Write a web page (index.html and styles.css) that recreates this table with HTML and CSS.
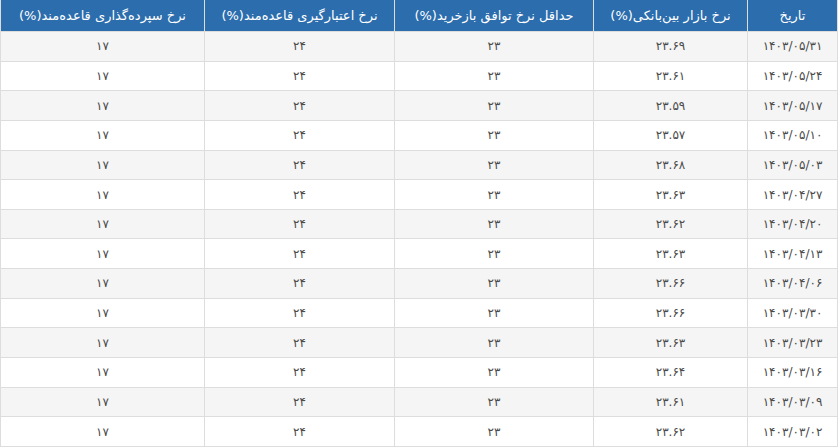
FILE: index.html
```html
<!DOCTYPE html>
<html lang="fa" dir="rtl">
<head>
<meta charset="utf-8">
<title>نرخ‌ها</title>
<link rel="stylesheet" href="styles.css">
</head>
<body>
<table class="rates">
  <colgroup>
    <col class="c1"><col class="c2"><col class="c3"><col class="c4"><col class="c5">
  </colgroup>
  <thead>
    <tr>
      <th>تاریخ</th>
      <th>نرخ بازار بین‌بانکی(%)</th>
      <th>حداقل نرخ توافق بازخرید(%)</th>
      <th>نرخ اعتبارگیری قاعده‌مند(%)</th>
      <th>نرخ سپرده‌گذاری قاعده‌مند(%)</th>
    </tr>
  </thead>
  <tbody>
    <tr><td>۱۴۰۳/۰۵/۳۱</td><td>۲۳.۶۹</td><td>۲۳</td><td>۲۴</td><td>۱۷</td></tr>
    <tr><td>۱۴۰۳/۰۵/۲۴</td><td>۲۳.۶۱</td><td>۲۳</td><td>۲۴</td><td>۱۷</td></tr>
    <tr><td>۱۴۰۳/۰۵/۱۷</td><td>۲۳.۵۹</td><td>۲۳</td><td>۲۴</td><td>۱۷</td></tr>
    <tr><td>۱۴۰۳/۰۵/۱۰</td><td>۲۳.۵۷</td><td>۲۳</td><td>۲۴</td><td>۱۷</td></tr>
    <tr><td>۱۴۰۳/۰۵/۰۳</td><td>۲۳.۶۸</td><td>۲۳</td><td>۲۴</td><td>۱۷</td></tr>
    <tr><td>۱۴۰۳/۰۴/۲۷</td><td>۲۳.۶۳</td><td>۲۳</td><td>۲۴</td><td>۱۷</td></tr>
    <tr><td>۱۴۰۳/۰۴/۲۰</td><td>۲۳.۶۲</td><td>۲۳</td><td>۲۴</td><td>۱۷</td></tr>
    <tr><td>۱۴۰۳/۰۴/۱۳</td><td>۲۳.۶۳</td><td>۲۳</td><td>۲۴</td><td>۱۷</td></tr>
    <tr><td>۱۴۰۳/۰۴/۰۶</td><td>۲۳.۶۶</td><td>۲۳</td><td>۲۴</td><td>۱۷</td></tr>
    <tr><td>۱۴۰۳/۰۳/۳۰</td><td>۲۳.۶۶</td><td>۲۳</td><td>۲۴</td><td>۱۷</td></tr>
    <tr><td>۱۴۰۳/۰۳/۲۳</td><td>۲۳.۶۳</td><td>۲۳</td><td>۲۴</td><td>۱۷</td></tr>
    <tr><td>۱۴۰۳/۰۳/۱۶</td><td>۲۳.۶۴</td><td>۲۳</td><td>۲۴</td><td>۱۷</td></tr>
    <tr><td>۱۴۰۳/۰۳/۰۹</td><td>۲۳.۶۱</td><td>۲۳</td><td>۲۴</td><td>۱۷</td></tr>
    <tr><td>۱۴۰۳/۰۳/۰۲</td><td>۲۳.۶۲</td><td>۲۳</td><td>۲۴</td><td>۱۷</td></tr>
  </tbody>
</table>
</body>
</html>
```

FILE: styles.css
```css
html, body {
  margin: 0;
  padding: 0;
  background: #ffffff;
}
body {
  font-family: "DejaVu Sans", "Noto Sans", sans-serif;
}
.rates {
  width: 837px;
  border-collapse: collapse;
  table-layout: fixed;
  direction: rtl;
}
.rates .c1 { width: 90px; }
.rates .c2 { width: 154px; }
.rates .c3 { width: 199px; }
.rates .c4 { width: 190px; }
.rates .c5 { width: 204px; }
.rates th {
  background: #2b6dad;
  color: #ffffff;
  font-weight: normal;
  font-size: 13px;
  height: 31px;
  padding: 0 6px;
  text-align: center;
  border: 1px solid #dddddd;
  border-top: none;
  white-space: nowrap;
}
.rates td {
  height: 28.65px;
  padding: 0 6px;
  text-align: center;
  font-size: 12px;
  color: #4a4a4a;
  border: 1px solid #dddddd;
}
.rates tbody tr:nth-child(odd) td {
  background: #f5f5f5;
}
```
